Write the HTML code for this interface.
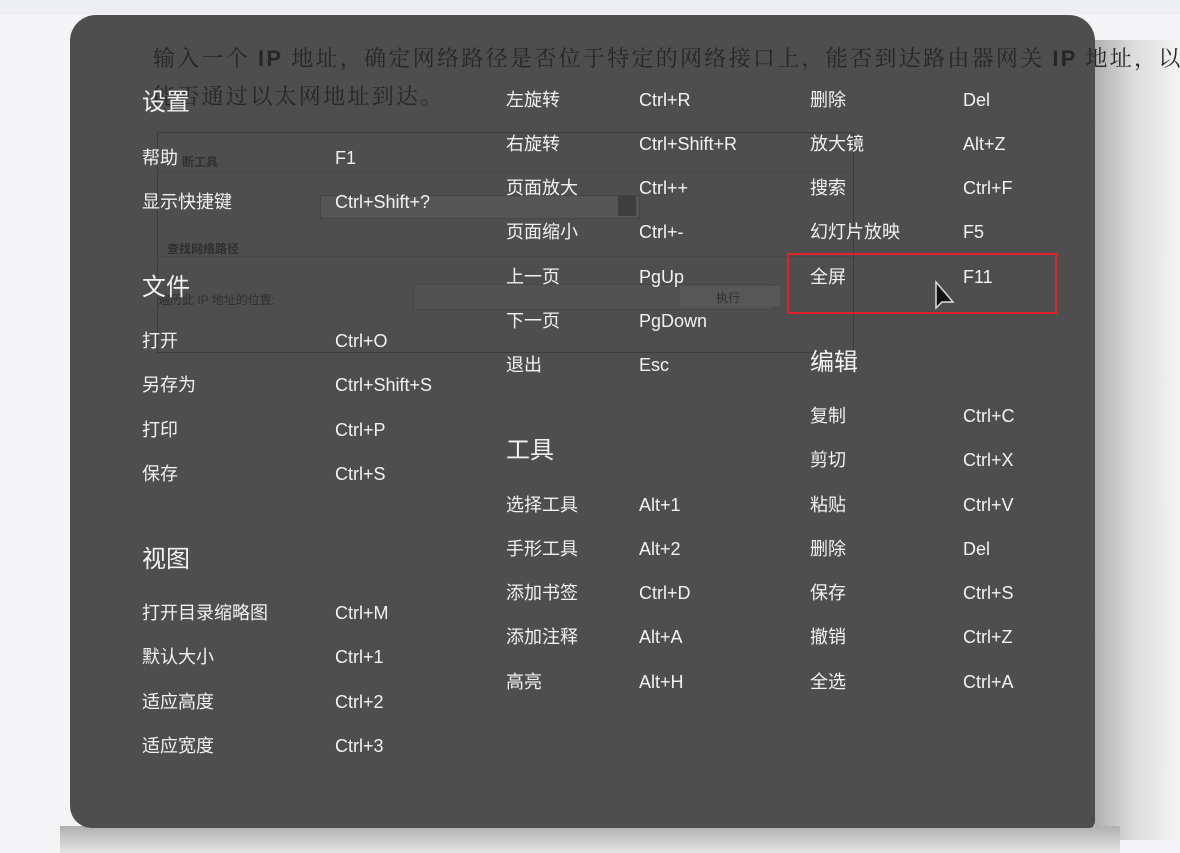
<!DOCTYPE html>
<html><head><meta charset="utf-8"><style>
html,body{margin:0;padding:0}
body{width:1180px;height:853px;position:relative;overflow:hidden;background:#f4f4f6;font-family:"Liberation Sans","Noto Sans CJK SC",sans-serif}
.topbar{position:absolute;left:0;top:0;width:1180px;height:14px;background:#eceef2}
.shadowR{position:absolute;left:1095px;top:40px;width:85px;height:800px;background:linear-gradient(90deg,#b0b0b0,#dcdcdc 45%,#f4f4f4)}
.shadowB{position:absolute;left:60px;top:826px;width:1060px;height:27px;background:linear-gradient(180deg,#b0b0b0,#d0d0d0 60%,#e4e4e4)}
.panel{position:absolute;left:70px;top:15px;width:1025px;height:813px;background:#4e4e4e;border-radius:26px 26px 6px 22px}
.bg{position:absolute;color:#262626;font-family:"Liberation Serif","Noto Serif CJK SC",serif;font-size:22px;letter-spacing:2.3px;white-space:nowrap}
.l{position:absolute;color:#f2f2f2;font-size:18px;line-height:22px;white-space:nowrap;font-family:"Liberation Sans","Noto Sans CJK SC",sans-serif}
.h{position:absolute;color:#f2f2f2;font-size:24px;line-height:28px;white-space:nowrap;font-family:"Liberation Sans","Noto Sans CJK SC",sans-serif}
.line{position:absolute;background:#3c3c3c}
.faint{position:absolute;color:#303030;font-size:12px;font-weight:bold;white-space:nowrap;font-family:"Liberation Sans","Noto Sans CJK SC",sans-serif}
</style></head><body>
<div class="topbar"></div>
<div class="shadowR"></div>
<div class="shadowB"></div>
<div class="panel"></div>
<div class="bg" style="left:153px;top:42px">输入一个 <b style="font-family:'Liberation Sans',sans-serif">IP</b> 地址，确定网络路径是否位于特定的网络接口上，能否到达路由器网关 <b style="font-family:'Liberation Sans',sans-serif">IP</b> 地址，以</div>
<div class="bg" style="left:153px;top:80px">能否通过以太网地址到达。</div>
<div class="line" style="left:157px;top:132px;width:696px;height:1px"></div>
<div class="line" style="left:157px;top:132px;width:1px;height:220px"></div>
<div class="line" style="left:853px;top:132px;width:1px;height:220px"></div>
<div class="line" style="left:157px;top:352px;width:696px;height:1px"></div>
<div class="line" style="left:157px;top:172px;width:696px;height:1px;background:#474747"></div>
<div class="line" style="left:157px;top:256px;width:696px;height:1px;background:#474747"></div>
<div class="line" style="left:320px;top:195px;width:318px;height:22px;background:#555;border:1px solid #444"></div>
<div class="line" style="left:618px;top:196px;width:18px;height:20px;background:#3e3e3e"></div>
<div class="line" style="left:413px;top:284px;width:360px;height:24px;background:#525252;border:1px solid #474747"></div>
<div class="line" style="left:680px;top:286px;width:100px;height:20px;background:#575757"></div>
<div class="faint" style="left:182px;top:153px">断工具</div>
<div class="faint" style="left:167px;top:240px">查找网络路径</div>
<div class="faint" style="left:158px;top:291px;font-weight:normal">遍历此 IP 地址的位置:</div>
<div class="faint" style="left:716px;top:289px;font-weight:normal">执行</div>

<div class="h" style="left:142px;top:89px">设置</div>
<div class="l" style="left:142px;top:147px">帮助</div><div class="l" style="left:335px;top:147px">F1</div>
<div class="l" style="left:142px;top:191px">显示快捷键</div><div class="l" style="left:335px;top:191px">Ctrl+Shift+?</div>
<div class="h" style="left:142px;top:274px">文件</div>
<div class="l" style="left:142px;top:330px">打开</div><div class="l" style="left:335px;top:330px">Ctrl+O</div>
<div class="l" style="left:142px;top:374px">另存为</div><div class="l" style="left:335px;top:374px">Ctrl+Shift+S</div>
<div class="l" style="left:142px;top:419px">打印</div><div class="l" style="left:335px;top:419px">Ctrl+P</div>
<div class="l" style="left:142px;top:463px">保存</div><div class="l" style="left:335px;top:463px">Ctrl+S</div>
<div class="h" style="left:142px;top:546px">视图</div>
<div class="l" style="left:142px;top:602px">打开目录缩略图</div><div class="l" style="left:335px;top:602px">Ctrl+M</div>
<div class="l" style="left:142px;top:646px">默认大小</div><div class="l" style="left:335px;top:646px">Ctrl+1</div>
<div class="l" style="left:142px;top:691px">适应高度</div><div class="l" style="left:335px;top:691px">Ctrl+2</div>
<div class="l" style="left:142px;top:735px">适应宽度</div><div class="l" style="left:335px;top:735px">Ctrl+3</div>

<div class="l" style="left:506px;top:89px">左旋转</div><div class="l" style="left:639px;top:89px">Ctrl+R</div>
<div class="l" style="left:506px;top:133px">右旋转</div><div class="l" style="left:639px;top:133px">Ctrl+Shift+R</div>
<div class="l" style="left:506px;top:177px">页面放大</div><div class="l" style="left:639px;top:177px">Ctrl++</div>
<div class="l" style="left:506px;top:221px">页面缩小</div><div class="l" style="left:639px;top:221px">Ctrl+-</div>
<div class="l" style="left:506px;top:266px">上一页</div><div class="l" style="left:639px;top:266px">PgUp</div>
<div class="l" style="left:506px;top:310px">下一页</div><div class="l" style="left:639px;top:310px">PgDown</div>
<div class="l" style="left:506px;top:354px">退出</div><div class="l" style="left:639px;top:354px">Esc</div>
<div class="h" style="left:506px;top:437px">工具</div>
<div class="l" style="left:506px;top:494px">选择工具</div><div class="l" style="left:639px;top:494px">Alt+1</div>
<div class="l" style="left:506px;top:538px">手形工具</div><div class="l" style="left:639px;top:538px">Alt+2</div>
<div class="l" style="left:506px;top:582px">添加书签</div><div class="l" style="left:639px;top:582px">Ctrl+D</div>
<div class="l" style="left:506px;top:626px">添加注释</div><div class="l" style="left:639px;top:626px">Alt+A</div>
<div class="l" style="left:506px;top:671px">高亮</div><div class="l" style="left:639px;top:671px">Alt+H</div>

<div class="l" style="left:810px;top:89px">删除</div><div class="l" style="left:963px;top:89px">Del</div>
<div class="l" style="left:810px;top:133px">放大镜</div><div class="l" style="left:963px;top:133px">Alt+Z</div>
<div class="l" style="left:810px;top:177px">搜索</div><div class="l" style="left:963px;top:177px">Ctrl+F</div>
<div class="l" style="left:810px;top:221px">幻灯片放映</div><div class="l" style="left:963px;top:221px">F5</div>
<div class="l" style="left:810px;top:266px">全屏</div><div class="l" style="left:963px;top:266px">F11</div>
<div style="position:absolute;left:787px;top:253px;width:266px;height:57px;border:2px solid #e0222a"></div>
<svg style="position:absolute;left:933px;top:280px" width="24" height="34" viewBox="0 0 24 34"><path d="M3 2 L3 28 L9 22 L20 22 Z" fill="#111" stroke="#ddd" stroke-width="1.5"/></svg>
<div class="h" style="left:810px;top:349px">编辑</div>
<div class="l" style="left:810px;top:405px">复制</div><div class="l" style="left:963px;top:405px">Ctrl+C</div>
<div class="l" style="left:810px;top:449px">剪切</div><div class="l" style="left:963px;top:449px">Ctrl+X</div>
<div class="l" style="left:810px;top:494px">粘贴</div><div class="l" style="left:963px;top:494px">Ctrl+V</div>
<div class="l" style="left:810px;top:538px">删除</div><div class="l" style="left:963px;top:538px">Del</div>
<div class="l" style="left:810px;top:582px">保存</div><div class="l" style="left:963px;top:582px">Ctrl+S</div>
<div class="l" style="left:810px;top:626px">撤销</div><div class="l" style="left:963px;top:626px">Ctrl+Z</div>
<div class="l" style="left:810px;top:671px">全选</div><div class="l" style="left:963px;top:671px">Ctrl+A</div>
</body></html>
